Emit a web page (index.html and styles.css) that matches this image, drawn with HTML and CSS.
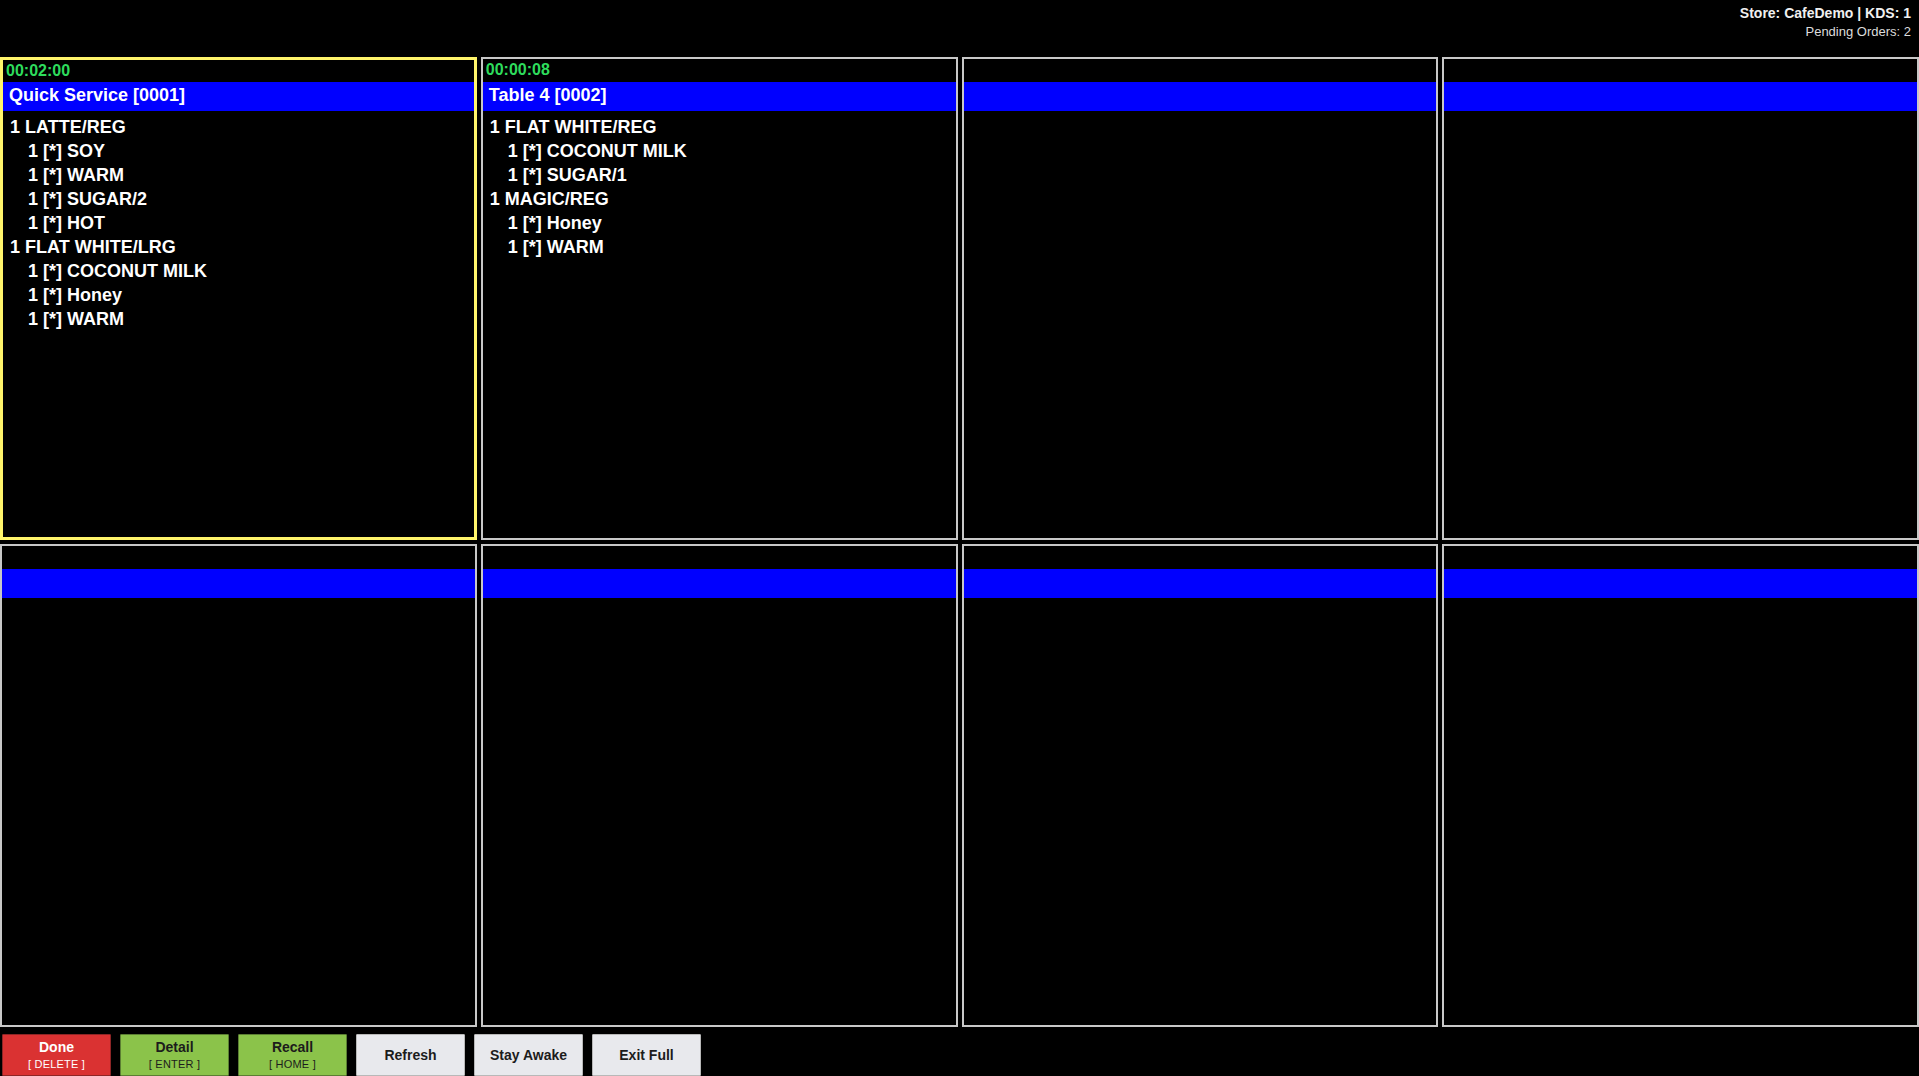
FILE: index.html
```html
<!DOCTYPE html>
<html>
<head>
<meta charset="utf-8">
<title>KDS</title>
<link rel="stylesheet" href="styles.css">
</head>
<body>
<div class="screen">
  <header class="topbar">
    <div class="store">Store: CafeDemo | KDS: 1</div>
    <div class="pending">Pending Orders: 2</div>
  </header>
  <main class="grid">
    <section class="card selected">
      <div class="timer">00:02:00</div>
      <div class="title">Quick Service [0001]</div>
      <ul class="items">
        <li class="item">1 LATTE/REG</li>
        <li class="mod">1 [*] SOY</li>
        <li class="mod">1 [*] WARM</li>
        <li class="mod">1 [*] SUGAR/2</li>
        <li class="mod">1 [*] HOT</li>
        <li class="item">1 FLAT WHITE/LRG</li>
        <li class="mod">1 [*] COCONUT MILK</li>
        <li class="mod">1 [*] Honey</li>
        <li class="mod">1 [*] WARM</li>
      </ul>
    </section>
    <section class="card">
      <div class="timer">00:00:08</div>
      <div class="title">Table 4 [0002]</div>
      <ul class="items">
        <li class="item">1 FLAT WHITE/REG</li>
        <li class="mod">1 [*] COCONUT MILK</li>
        <li class="mod">1 [*] SUGAR/1</li>
        <li class="item">1 MAGIC/REG</li>
        <li class="mod">1 [*] Honey</li>
        <li class="mod">1 [*] WARM</li>
      </ul>
    </section>
    <section class="card"><div class="timer"></div><div class="title"></div></section>
    <section class="card"><div class="timer"></div><div class="title"></div></section>
    <section class="card"><div class="timer"></div><div class="title"></div></section>
    <section class="card"><div class="timer"></div><div class="title"></div></section>
    <section class="card"><div class="timer"></div><div class="title"></div></section>
    <section class="card"><div class="timer"></div><div class="title"></div></section>
  </main>
  <footer class="actions">
    <button class="btn red"><span class="lbl">Done</span><span class="key">[ DELETE ]</span></button>
    <button class="btn green"><span class="lbl">Detail</span><span class="key">[ ENTER ]</span></button>
    <button class="btn green"><span class="lbl">Recall</span><span class="key">[ HOME ]</span></button>
    <button class="btn grey"><span class="lbl">Refresh</span></button>
    <button class="btn grey"><span class="lbl">Stay Awake</span></button>
    <button class="btn grey"><span class="lbl">Exit Full</span></button>
  </footer>
</div>
</body>
</html>
```
FILE: styles.css
```css
* { box-sizing: border-box; }
html, body {
  margin: 0;
  padding: 0;
  background: #000;
  overflow: hidden;
}
body {
  font-family: "Liberation Sans", Arial, sans-serif;
  color: #fff;
}
.screen {
  width: 1919px;
  height: 1076px;
  display: flex;
  flex-direction: column;
}
.topbar {
  height: 57px;
  padding: 5px 8px 0 0;
  text-align: right;
  line-height: 17px;
}
.store {
  font-size: 14px;
  font-weight: bold;
  color: #f0f0f0;
}
.pending {
  font-size: 13px;
  margin-top: 1px;
  color: #dcdcdc;
}
.grid {
  display: grid;
  grid-template-columns: repeat(4, 1fr);
  grid-template-rows: 483px 483px;
  column-gap: 4px;
  row-gap: 4px;
}
.card {
  border: 2px solid #c8c8c8;
  background: #000;
  overflow: hidden;
}
.card.selected {
  border: 3px solid #fff56b;
}
.card.selected .timer {
  height: 22px;
}
.timer {
  height: 23px;
  line-height: 21px;
  padding-left: 3px;
  font-size: 16px;
  font-weight: bold;
  color: #2edc5c;
}
.title {
  height: 29px;
  background: #0000ff;
  padding: 1px 0 3px 6px;
  line-height: 25px;
  font-size: 18px;
  font-weight: bold;
  color: #fff;
}
.items {
  list-style: none;
  margin: 0;
  padding: 4px 0 0 7px;
  font-size: 18px;
  font-weight: bold;
  line-height: 24px;
}
.mod {
  padding-left: 18px;
}
.actions {
  display: flex;
  gap: 9px;
  padding: 7px 0 0 2px;
}
.btn {
  width: 109px;
  height: 42px;
  display: flex;
  flex-direction: column;
  align-items: center;
  justify-content: center;
  border: 1px solid #888;
  border-radius: 1px;
  font-family: "Liberation Sans", Arial, sans-serif;
  padding: 0;
  margin: 0;
}
.lbl {
  font-size: 14px;
  font-weight: bold;
  line-height: 17px;
}
.key {
  font-size: 11px;
  line-height: 16px;
  letter-spacing: 0.2px;
}
.red {
  background: #da3232;
  border-color: #8e2626;
  color: #fff;
}
.green {
  background: #8bc34a;
  border-color: #5b7e33;
  color: #1c1c1c;
}
.grey {
  background: #e8e9ed;
  border-color: #b8b8b8;
  color: #1c1c1c;
}
```
